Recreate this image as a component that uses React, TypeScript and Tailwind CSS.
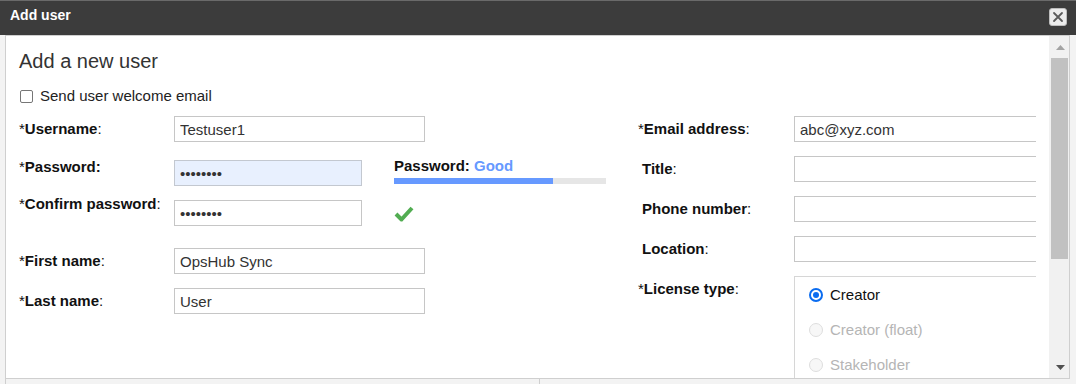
import React from "react";

const font = { fontFamily: '"Liberation Sans", Arial, sans-serif' };

const inputBase = "h-[26px] border px-[5px] text-[15px] text-[#333] outline-none";
const inputCls = `${inputBase} border-[#c6c6c6] bg-white`;

function FieldLabel({
  text,
  required = true,
  boldColon = false,
  className = "",
}: {
  text: string;
  required?: boolean;
  boldColon?: boolean;
  className?: string;
}) {
  return (
    <div className={`shrink-0 text-[15px] leading-[18px] text-[#111] ${className}`}>
      {required && "*"}
      <span className="font-bold">
        {text}
        {boldColon && ":"}
      </span>
      {!boldColon && ":"}
    </div>
  );
}

function Radio({ label, checked, disabled }: { label: string; checked?: boolean; disabled?: boolean }) {
  return (
    <div className="flex h-[35px] items-center pl-[14px]">
      {checked ? (
        <span className="flex h-[14px] w-[14px] items-center justify-center rounded-full border-2 border-[#0a6cf0] bg-white">
          <span className="h-[6px] w-[6px] rounded-full bg-[#0a6cf0]" />
        </span>
      ) : (
        <span className="h-[14px] w-[14px] rounded-full border border-[#dedede] bg-[#f7f7f7]" />
      )}
      <span className={`ml-[7px] text-[15px] leading-[18px] ${disabled ? "text-[#b5b5b5]" : "text-[#111]"}`}>
        {label}
      </span>
    </div>
  );
}

export default function App() {
  return (
    <div className="flex h-[384px] w-[1076px] flex-col overflow-hidden bg-[#f3f3f3]" style={font}>
      {/* title bar */}
      <div className="flex h-[35px] shrink-0 items-start justify-between border-t border-[#6a6a6a] bg-[#3c3c3c] pl-[10px] pr-[9px]">
        <div className="mt-[5px] text-[14px] font-bold leading-[18px] text-white">Add user</div>
        <button className="mt-[7px] flex h-[18px] w-[18px] items-center justify-center rounded-[3px] border border-[#bdbdbd] bg-[#ececec]">
          <svg width="12" height="12" viewBox="0 0 12 12">
            <path d="M2 2 L10 10 M10 2 L2 10" stroke="#5a5a5a" strokeWidth="1.8" strokeLinecap="round" />
          </svg>
        </button>
      </div>

      {/* body */}
      <div className="flex h-[344px] shrink-0">
        <div className="w-[5px] shrink-0" />
        <div className="flex w-[1065px] shrink-0 border border-[#cfcfcf] bg-white">
          <div className="flex-1 overflow-hidden pl-[13px] pt-[13px]">
            <h1 className="text-[20px] leading-[24px] text-[#333]">Add a new user</h1>
            <label className="mt-[14px] flex h-[18px] items-center">
              <span className="ml-px h-[13px] w-[13px] rounded-[2px] border border-[#767676] bg-white" />
              <span className="ml-[7px] text-[15px] leading-[18px] text-[#222]">Send user welcome email</span>
            </label>

            <div className="mt-[11px] flex">
              {/* left column */}
              <div className="w-[619px] shrink-0">
                <div className="flex h-[26px] items-center">
                  <FieldLabel text="Username" className="w-[155px]" />
                  <input className={`${inputCls} w-[251px]`} defaultValue="Testuser1" />
                </div>

                <div className="mt-[16px] flex items-start">
                  <FieldLabel text="Password" boldColon className="w-[155px]" />
                  <input
                    type="password"
                    className={`${inputBase} mt-[2px] w-[188px] border-[#c3c8d0] bg-[#e8f0fe]`}
                    defaultValue="Testuser"
                  />
                  <div className="ml-[32px] mt-[-1px] w-[212px]">
                    <div className="text-[15px] font-bold leading-[18px] text-[#111]">
                      Password: <span className="text-[#6699ff]">Good</span>
                    </div>
                    <div className="mt-[3px] h-[6px] w-full bg-[#e6e6e6]">
                      <div className="h-full bg-[#6699ff]" style={{ width: "75%" }} />
                    </div>
                  </div>
                </div>

                <div className="mt-[9px] flex items-start">
                  <FieldLabel text="Confirm password" className="w-[155px]" />
                  <input type="password" className={`${inputCls} mt-[5px] w-[188px]`} defaultValue="Testuser" />
                  <svg className="ml-[32px] mt-[10px]" width="20" height="17" viewBox="0 0 20 17">
                    <path d="M2 9 L7.5 14.5 L18 3" fill="none" stroke="#52ad52" strokeWidth="4" strokeLinejoin="round" />
                  </svg>
                </div>

                <div className="mt-[22px] flex h-[26px] items-center">
                  <FieldLabel text="First name" className="w-[155px]" />
                  <input className={`${inputCls} w-[251px]`} defaultValue="OpsHub Sync" />
                </div>

                <div className="mt-[14px] flex h-[26px] items-center">
                  <FieldLabel text="Last name" className="w-[155px]" />
                  <input className={`${inputCls} w-[251px]`} defaultValue="User" />
                </div>
              </div>

              {/* right column */}
              <div className="w-[398px] shrink-0">
                <div className="flex h-[26px] items-center">
                  <FieldLabel text="Email address" className="w-[156px]" />
                  <div className="flex-1 overflow-hidden">
                    <input className={`${inputCls} w-[300px]`} defaultValue="abc@xyz.com" />
                  </div>
                </div>
                {["Title", "Phone number", "Location"].map((t) => (
                  <div key={t} className="mt-[14px] flex h-[26px] items-center">
                    <FieldLabel text={t} required={false} className="w-[156px] pl-[4px]" />
                    <div className="flex-1 overflow-hidden">
                      <input className={`${inputCls} w-[300px]`} defaultValue="" />
                    </div>
                  </div>
                ))}
                <div className="mt-[14px] flex items-start">
                  <FieldLabel text="License type" className="mt-[4px] w-[156px]" />
                  <div className="flex-1 border-l border-t border-[#d6d6d6]">
                    <Radio label="Creator" checked />
                    <Radio label="Creator (float)" disabled />
                    <Radio label="Stakeholder" disabled />
                  </div>
                </div>
              </div>
            </div>
          </div>

          {/* scrollbar */}
          <div className="flex w-[20px] shrink-0 flex-col bg-[#f1f1f1]">
            <div className="flex h-[22px] items-center justify-center pl-[2px]">
              <svg width="9" height="5" viewBox="0 0 9 5">
                <path d="M0 5 L4.5 0 L9 5 Z" fill="#a3a3a3" />
              </svg>
            </div>
            <div className="ml-[2px] h-[201px] w-[17px] bg-[#c1c1c1]" />
            <div className="flex-1" />
            <div className="flex h-[22px] items-center justify-center pl-[2px]">
              <svg width="9" height="5" viewBox="0 0 9 5">
                <path d="M0 0 L9 0 L4.5 5 Z" fill="#505050" />
              </svg>
            </div>
          </div>
        </div>
        <div className="flex-1" />
      </div>

      {/* footer */}
      <div className="flex flex-1">
        <div className="w-[5px] shrink-0" />
        <div className="w-[534px] shrink-0 border-l border-[#cfcfcf]" />
        <div className="flex-1 border-l border-[#cfcfcf]" />
      </div>
    </div>
  );
}
